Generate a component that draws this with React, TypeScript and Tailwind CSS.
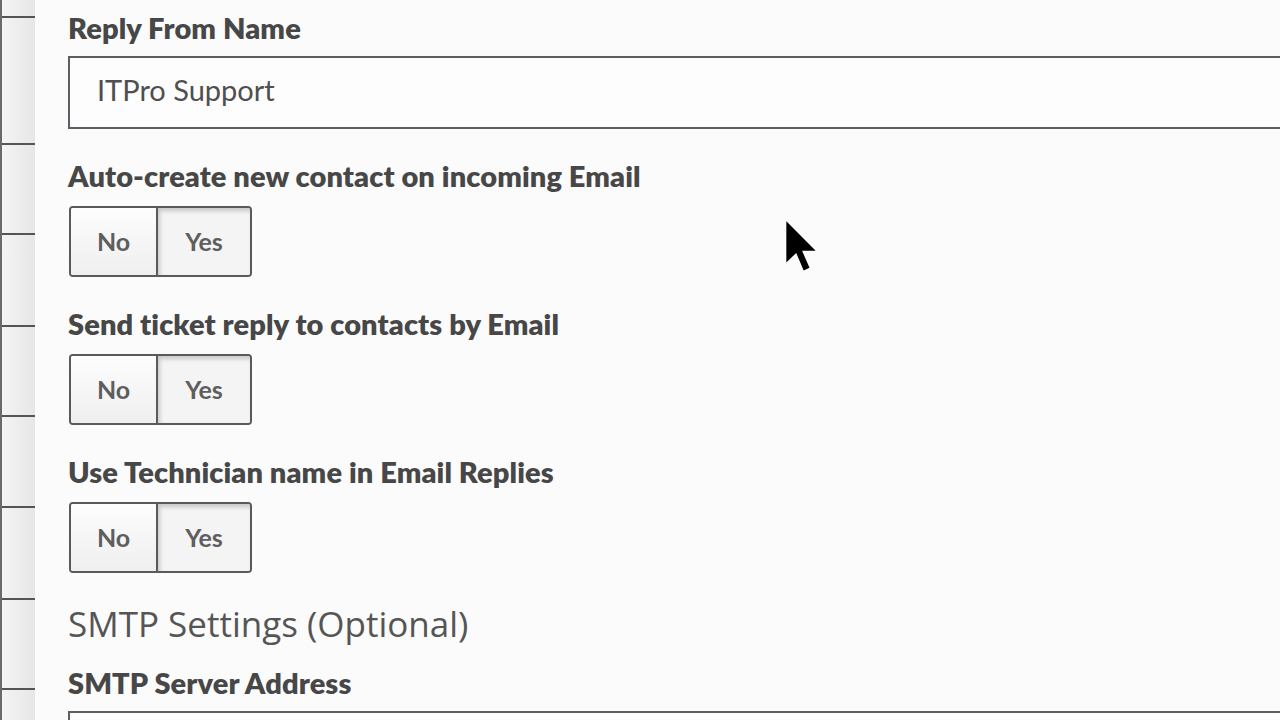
import React from "react";

const label = "block h-[30px] text-[29px] leading-[30px] font-extrabold text-[#474747] tracking-[0.1px]";

function Toggle({ className = "" }: { className?: string }) {
  return (
    <div className={`flex h-[71px] w-[183px] rounded-[4px] border-2 border-[#5a5a5a] overflow-hidden ${className}`}>
      <button className="w-[87px] h-full bg-gradient-to-b from-[#fdfdfd] to-[#efefef] text-[25px] font-bold text-[#5e5e5e] border-r-2 border-[#5a5a5a]">
        No
      </button>
      <button className="flex-1 h-full bg-[#f4f4f4] shadow-[inset_2px_3px_4px_rgba(0,0,0,0.18)] text-[25px] font-bold text-[#5e5e5e]">
        Yes
      </button>
    </div>
  );
}

export default function App() {
  const rows = [18, 127, 90, 92, 90, 91, 92, 90, 40];
  return (
    <div
      className="relative flex h-[720px] w-[1280px] overflow-hidden bg-[#fbfbfb]"
      style={{ fontFamily: "Lato, 'Liberation Sans', sans-serif" }}
    >
      {/* left rail */}
      <div className="flex w-[35px] shrink-0 flex-col border-l-2 border-[#6a6a6a] bg-gradient-to-r from-[#f4f4f4] to-[#e6e6e6]">
        {rows.map((h, i) => (
          <div
            key={i}
            className="shrink-0 border-b-2 border-[#555] last:border-b-0"
            style={{ height: h }}
          />
        ))}
      </div>

      {/* form */}
      <div className="flex-1 pl-[33px] pt-[13px]">
        <label className={label}>Reply From Name</label>
        <div className="mt-[13px] flex h-[73px] w-[1220px] items-center border-2 border-[#5b5f63] bg-[#fdfdfd] pb-[6px] pl-[27px] text-[29px] text-[#4f4f4f]">
          ITPro Support
        </div>

        <label className={`${label} mt-[32px]`}>Auto-create new contact on incoming Email</label>
        <Toggle className="mt-[15px] ml-[1px]" />

        <label className={`${label} mt-[32px]`}>Send ticket reply to contacts by Email</label>
        <Toggle className="mt-[15px] ml-[1px]" />

        <label className={`${label} mt-[32px]`}>Use Technician name in Email Replies</label>
        <Toggle className="mt-[15px] ml-[1px]" />

        <h2
          className="mt-[29px] h-[44px] text-[35px] leading-[44px] text-[#555]"
          style={{ fontFamily: "'Open Sans', sans-serif" }}
        >
          SMTP Settings (Optional)
        </h2>
        <label className={`${label} mt-[22px]`}>SMTP Server Address</label>
        <div className="mt-[13px] h-[73px] w-[1220px] border-2 border-[#5b5f63] bg-[#fdfdfd]" />
      </div>

      {/* mouse pointer */}
      <svg
        className="absolute left-[785px] top-[219px]"
        width="32"
        height="55"
        viewBox="0 0 12 20"
      >
        <path d="M0.5 0.5 L0.5 16 L4.2 12.4 L7 19 L9.2 18 L6.4 11.6 L11.5 11.6 Z" fill="#000" />
      </svg>
    </div>
  );
}
